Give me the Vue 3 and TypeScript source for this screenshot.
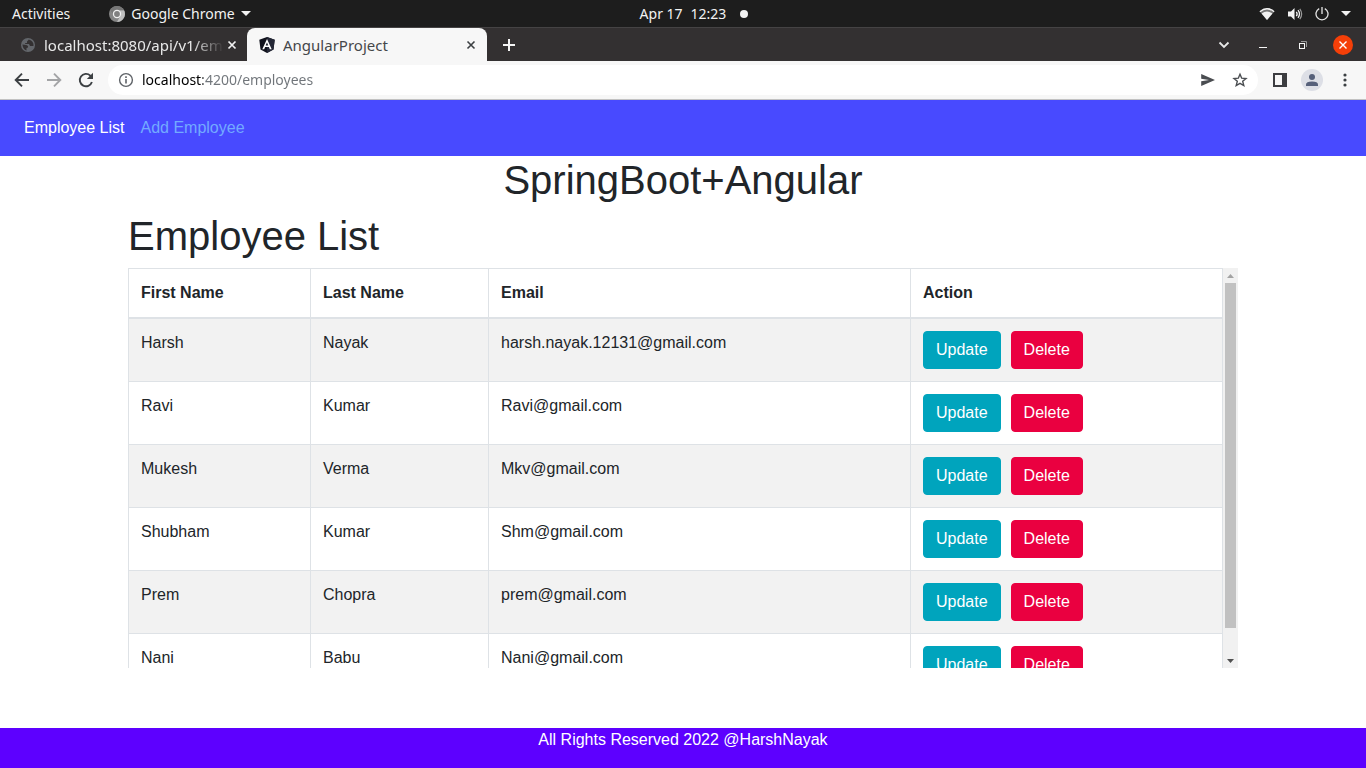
<script setup lang="ts">
import { computed, onMounted, ref } from 'vue'

interface Employee {
  id: number
  firstName: string
  lastName: string
  email: string
}

const employees = ref<Employee[]>([
  { id: 1, firstName: 'Harsh', lastName: 'Nayak', email: 'harsh.nayak.12131@gmail.com' },
  { id: 2, firstName: 'Ravi', lastName: 'Kumar', email: 'Ravi@gmail.com' },
  { id: 3, firstName: 'Mukesh', lastName: 'Verma', email: 'Mkv@gmail.com' },
  { id: 4, firstName: 'Shubham', lastName: 'Kumar', email: 'Shm@gmail.com' },
  { id: 5, firstName: 'Prem', lastName: 'Chopra', email: 'prem@gmail.com' },
  { id: 6, firstName: 'Nani', lastName: 'Babu', email: 'Nani@gmail.com' },
])

const address = ref('localhost:4200/employees')

const viewport = ref<HTMLElement | null>(null)
const visible = ref(1)
const total = ref(1)
const top = ref(0)

function measure(): void {
  const el = viewport.value
  if (!el) return
  visible.value = el.clientHeight
  total.value = el.scrollHeight
  top.value = el.scrollTop
}

function scrollRows(step: number): void {
  viewport.value?.scrollBy({ top: step })
}

const thumbStyle = computed(() => ({
  height: `${(visible.value / total.value) * 100}%`,
  top: `${(top.value / total.value) * 100}%`,
}))

onMounted(measure)
</script>

<template>
  <div class="screen">
    <header class="system-bar">
      <div class="system-left">
        <button type="button" class="plain activities">Activities</button>
        <button type="button" class="plain app-menu">
          <svg width="16" height="16" viewBox="0 0 16 16" aria-hidden="true">
            <circle cx="8" cy="8" r="8" fill="#858585" />
            <path d="M8 4.200H15A8 8 0 0 1 8 16L11.600 9.500Z" fill="#bdbdbd" />
            <path d="M1.200 3.800A8 8 0 0 1 15 4.200H8L4.500 9Z" fill="#777" />
            <circle cx="8" cy="8" r="4.200" fill="#f0f0f0" />
            <circle cx="8" cy="8" r="2.900" fill="#808080" />
          </svg>
          <span>Google Chrome</span>
          <svg width="10" height="5" viewBox="0 0 10 5" aria-hidden="true"><path d="M0 0H10L5 5Z" fill="#f2f2f2" /></svg>
        </button>
      </div>
      <button type="button" class="plain clock"><span>Apr 17</span><span>12:23</span></button>
      <div class="system-right">
        <svg class="notice" width="8" height="8" viewBox="0 0 8 8" aria-hidden="true"><circle cx="4" cy="4" r="4" fill="#f2f2f2" /></svg>
        <button type="button" class="plain status" aria-label="System menu">
          <svg width="16" height="14" viewBox="0 0 16 14" aria-hidden="true">
            <path d="M.5 4.300Q8-2.300 15.500 4.300L8 13Z" fill="#777" />
            <path d="M.5 4.300Q8-2.300 15.500 4.300L14.700 5.200Q8-.2 1.300 5.200Z" fill="#f2f2f2" />
            <path d="M2.600 6.500Q8 2.700 13.400 6.500L8 13Z" fill="#f2f2f2" />
          </svg>
          <svg width="16" height="14" viewBox="0 0 16 14" aria-hidden="true">
            <path d="M1 4.500H4L7.500 1V13L4 9.500H1Z" fill="#f2f2f2" />
            <path d="M9.300 4.800Q11 7 9.300 9.200M11 3.200Q14 7 11 10.800" fill="none" stroke="#f2f2f2" stroke-width="1.300" />
            <path d="M12.800 1.800Q16.500 7 12.800 12.200" fill="none" stroke="#999" stroke-width="1.200" />
          </svg>
          <svg width="14" height="14" viewBox="0 0 14 14" aria-hidden="true">
            <path d="M4.200 1.600A6 6 0 1 0 9.800 1.600M7 0V7" fill="none" stroke="#e6e6e6" stroke-width="1.300" />
          </svg>
          <svg width="10" height="5" viewBox="0 0 10 5" aria-hidden="true"><path d="M0 0H10L5 5Z" fill="#f2f2f2" /></svg>
        </button>
      </div>
    </header>

    <div class="tab-strip">
      <div class="tab">
        <svg width="16" height="16" viewBox="0 0 16 16" aria-hidden="true">
          <circle cx="8" cy="8" r="7" fill="#63666b" />
          <path d="M2.400 7.500L6 8Q8.500 8.500 8 10.500L6.500 11V13.500Q3 12.500 2.400 7.500ZM8.800 2.400L7 4.500V6H5.200V7H9L10 9H13.500Q14 4 8.800 2.400Z" fill="#333031" />
        </svg>
        <button type="button" class="plain tab-title fading">localhost:8080/api/v1/em</button>
        <button type="button" class="plain" aria-label="Close localhost tab">
          <svg width="10" height="10" viewBox="0 0 10 10" aria-hidden="true"><path d="M1.500 1.500L8.500 8.500M8.500 1.500L1.500 8.500" stroke="#f2f2f2" stroke-width="1.700" /></svg>
        </button>
      </div>
      <div class="tab active">
        <svg width="16" height="16" viewBox="0 0 16 16" aria-hidden="true">
          <path d="M8 0L15.700 2.800L14.500 12.500L8 16L1.500 12.500L.3 2.800Z" fill="#11131d" />
          <path d="M8 0L15.700 2.800L14.500 12.500L8 16Z" fill="#242736" />
          <path d="M8 2L3.300 12.300H5.200L6.100 10.100H9.900L10.800 12.300H12.700ZM8 5.400L9.300 8.600H6.700Z" fill="#fff" fill-rule="evenodd" />
        </svg>
        <button type="button" class="plain tab-title">AngularProject</button>
        <button type="button" class="plain" aria-label="Close AngularProject tab">
          <svg width="10" height="10" viewBox="0 0 10 10" aria-hidden="true"><path d="M1.500 1.500L8.500 8.500M8.500 1.500L1.500 8.500" stroke="#3c4043" stroke-width="1.600" /></svg>
        </button>
      </div>
      <button type="button" class="plain new-tab" aria-label="New tab">
        <svg width="12" height="12" viewBox="0 0 12 12" aria-hidden="true"><path d="M6 0V12M0 6H12" stroke="#f5f5f5" stroke-width="2" /></svg>
      </button>
      <div class="window-controls">
        <button type="button" class="plain" aria-label="Search tabs">
          <svg width="12" height="8" viewBox="0 0 12 8" aria-hidden="true"><path d="M1.500 1.500L6 6L10.500 1.500" fill="none" stroke="#e8e8e8" stroke-width="1.800" /></svg>
        </button>
        <button type="button" class="plain" aria-label="Minimize">
          <svg width="8" height="6" viewBox="0 0 8 6" aria-hidden="true"><path d="M0 5.500H8" stroke="#f5f5f5" /></svg>
        </button>
        <button type="button" class="plain" aria-label="Restore">
          <svg width="8" height="8" viewBox="0 0 8 8" aria-hidden="true">
            <path d="M2 .5H7.500V6" fill="none" stroke="#999" />
            <rect x=".5" y="2.500" width="5" height="5" fill="none" stroke="#f5f5f5" />
          </svg>
        </button>
        <button type="button" class="plain" aria-label="Close window">
          <svg width="20" height="20" viewBox="0 0 20 20" aria-hidden="true">
            <circle cx="10" cy="10" r="10" fill="#f53f08" />
            <path d="M6.500 6.500L13.500 13.500M13.500 6.500L6.500 13.500" stroke="#fff" stroke-width="1.400" />
          </svg>
        </button>
      </div>
    </div>

    <div class="toolbar">
      <div class="history">
        <button type="button" class="plain" aria-label="Back">
          <svg width="16" height="16" viewBox="0 0 16 16" aria-hidden="true"><path d="M15 8H2.500M8 1.700L1.700 8L8 14.300" fill="none" stroke="#3c4043" stroke-width="1.900" /></svg>
        </button>
        <button type="button" class="plain" aria-label="Forward">
          <svg width="16" height="16" viewBox="0 0 16 16" aria-hidden="true"><path d="M1 8H13.500M8 1.700L14.300 8L8 14.300" fill="none" stroke="#a3a4a6" stroke-width="1.900" /></svg>
        </button>
        <button type="button" class="plain" aria-label="Reload">
          <svg width="16" height="16" viewBox="0 0 16 16" aria-hidden="true">
            <path d="M13.900 10A6.200 6.200 0 1 1 12.300 3.600L13.500 5" fill="none" stroke="#3c4043" stroke-width="1.900" />
            <path d="M15 .8V7H8.800Z" fill="#3c4043" />
          </svg>
        </button>
      </div>
      <div class="omnibox">
        <svg width="16" height="16" viewBox="0 0 16 16" aria-hidden="true">
          <circle cx="8" cy="8" r="6.400" fill="none" stroke="#5f6368" stroke-width="1.400" />
          <path d="M8 7V11.500M8 4.300V5.900" stroke="#5f6368" stroke-width="1.600" />
        </svg>
        <input v-model="address" type="text" aria-label="Address" spellcheck="false" />
        <button type="button" class="plain" aria-label="Share this page">
          <svg width="16" height="16" viewBox="0 0 16 16" aria-hidden="true"><path d="M1.200 2L15 8L1.200 14V9.300L9 8L1.200 6.700Z" fill="#4a4d51" /></svg>
        </button>
        <button type="button" class="plain" aria-label="Bookmark this tab">
          <svg width="16" height="16" viewBox="0 0 16 16" aria-hidden="true"><path d="M8 2.200L9.700 6.200L14 6.500L10.700 9.300L11.800 13.600L8 11.300L4.200 13.600L5.300 9.300L2 6.500L6.300 6.200Z" fill="none" stroke="#4a4d51" stroke-width="1.400" /></svg>
        </button>
      </div>
      <div class="browser-actions">
        <button type="button" class="plain" aria-label="Side panel">
          <svg width="14" height="14" viewBox="0 0 14 14" aria-hidden="true"><path d="M0 0H14V14H0ZM2 2V12H9V2Z" fill="#3c3d40" fill-rule="evenodd" /></svg>
        </button>
        <button type="button" class="plain" aria-label="Profile">
          <svg width="22" height="22" viewBox="0 0 22 22" aria-hidden="true">
            <circle cx="11" cy="11" r="11" fill="#dddfe6" />
            <circle cx="11" cy="8" r="3" fill="#56607a" />
            <path d="M5 17V15.500Q5 12.500 11 12.500T17 15.500V17Z" fill="#56607a" />
          </svg>
        </button>
        <button type="button" class="plain" aria-label="Browser menu">
          <svg width="4" height="14" viewBox="0 0 4 14" aria-hidden="true"><g fill="#3c4043"><circle cx="2" cy="2" r="1.600" /><circle cx="2" cy="7" r="1.600" /><circle cx="2" cy="12" r="1.600" /></g></svg>
        </button>
      </div>
    </div>

    <nav class="site-nav">
      <a href="#employees" class="current">Employee List</a>
      <a href="#create-employee">Add Employee</a>
    </nav>

    <main class="page">
      <h1 class="brand">SpringBoot+Angular</h1>
      <h2>Employee List</h2>
      <div class="scroll-box">
        <div ref="viewport" class="scroll-view" tabindex="0" @scroll="measure">
          <table>
            <colgroup>
              <col class="col-first" />
              <col class="col-last" />
              <col class="col-email" />
              <col />
            </colgroup>
            <thead>
              <tr>
                <th scope="col">First Name</th>
                <th scope="col">Last Name</th>
                <th scope="col">Email</th>
                <th scope="col">Action</th>
              </tr>
            </thead>
            <tbody>
              <tr v-for="employee in employees" :key="employee.id">
                <td>{{ employee.firstName }}</td>
                <td>{{ employee.lastName }}</td>
                <td>{{ employee.email }}</td>
                <td>
                  <div class="actions">
                    <button type="button" class="btn update">Update</button>
                    <button type="button" class="btn delete">Delete</button>
                  </div>
                </td>
              </tr>
            </tbody>
          </table>
        </div>
        <div class="scrollbar">
          <button type="button" class="plain arrow" aria-label="Scroll up" @click="scrollRows(-40)">
            <svg width="7" height="4" viewBox="0 0 7 4" aria-hidden="true"><path d="M0 4L3.500 0L7 4Z" fill="#a3a3a3" /></svg>
          </button>
          <div class="track"><div class="thumb" :style="thumbStyle"></div></div>
          <button type="button" class="plain arrow" aria-label="Scroll down" @click="scrollRows(40)">
            <svg width="7" height="4" viewBox="0 0 7 4" aria-hidden="true"><path d="M0 0H7L3.500 4Z" fill="#505050" /></svg>
          </button>
        </div>
      </div>
    </main>

    <footer class="site-footer">All Rights Reserved 2022 @HarshNayak</footer>
  </div>
</template>

<style>
body {
  background: #fff;
}
</style>

<style scoped>
* {
  box-sizing: border-box;
}

.screen {
  display: flex;
  flex-direction: column;
  min-height: 100vh;
  font: 16px/24px "Liberation Sans", Arial, sans-serif;
  color: #212529;
}

svg {
  display: block;
  flex: none;
}

.plain {
  display: flex;
  align-items: center;
  padding: 0;
  border: 0;
  background: none;
  color: inherit;
  font: inherit;
  white-space: nowrap;
}

.system-bar,
.toolbar {
  font: 14px/20px "Noto Sans", "Open Sans", sans-serif;
}

.system-bar {
  display: grid;
  grid-template-columns: 1fr auto 1fr;
  align-items: center;
  height: 27px;
  background: #1d1d1d;
  color: #f2f2f2;
}

.system-left {
  display: flex;
  gap: 39px;
  padding-left: 12px;
}

.app-menu {
  gap: 6px;
}

.clock {
  gap: 8px;
}

.system-right {
  display: flex;
  align-items: center;
  justify-content: space-between;
  padding: 0 15px 0 14px;
}

.status {
  gap: 12px;
}

.tab-strip {
  display: flex;
  height: 34px;
  border-top: 1px solid #454344;
  background: #333031;
  color: #e8e8e8;
  font: 15px/20px "Noto Sans", "Open Sans", sans-serif;
}

.tab {
  display: flex;
  align-items: center;
  gap: 8px;
  width: 247px;
  padding: 0 10px 0 20px;
}

.tab.active {
  width: 240px;
  padding: 0 11px 0 12px;
  border-radius: 8px 8px 0 0;
  background: #f7f7f7;
  color: #45474a;
}

.tab-title {
  flex: 1;
  min-width: 0;
  overflow: hidden;
}

.fading {
  margin-right: -8px;
  mask-image: linear-gradient(90deg, #000 148px, transparent 180px);
}

.new-tab {
  padding: 0 16px;
}

.window-controls {
  display: flex;
  align-items: center;
  gap: 32px;
  margin-left: auto;
  padding-right: 13px;
}

.window-controls .plain:first-child {
  margin-right: -3px;
}

.window-controls .plain:last-child {
  margin-left: -6px;
}

.toolbar {
  display: flex;
  align-items: center;
  height: 39px;
  border-bottom: 1px solid #c2c2c2;
  background: #f7f7f7;
}

.history {
  display: flex;
  gap: 16px;
  padding: 0 14px;
}

.omnibox {
  display: flex;
  flex: 1;
  align-items: center;
  gap: 16px;
  height: 30px;
  padding: 0 10px;
  border-radius: 15px;
  background: #fff;
}

.omnibox input {
  flex: 1;
  min-width: 0;
  height: 20px;
  margin-left: -8px;
  padding: 0;
  border: 0;
  outline: 0;
  background: linear-gradient(90deg, #000 61px, #70757a 61px);
  background-clip: text;
  color: transparent;
  caret-color: #000;
  font: inherit;
}

.browser-actions {
  display: flex;
  align-items: center;
  gap: 14px;
  padding: 0 19px 0 15px;
}

.browser-actions .plain:last-child {
  padding-left: 6px;
}

.site-nav {
  display: flex;
  align-items: center;
  gap: 16px;
  height: 56px;
  padding: 0 24px;
  background: #484aff;
}

.site-nav a {
  color: #73aaff;
  text-decoration: none;
}

.site-nav .current {
  color: #fff;
}

.page {
  flex: 1;
  width: 100%;
  max-width: 1140px;
  margin: 0 auto;
  padding: 0 15px 60px;
}

h1,
h2 {
  margin: 0 0 8px;
  font-size: 40px;
  font-weight: 400;
  line-height: 48px;
}

.brand {
  text-align: center;
}

.scroll-box {
  display: flex;
  height: 400px;
}

.scroll-view {
  flex: 1;
  overflow-y: auto;
  scrollbar-width: none;
  outline: 0;
}

.scrollbar {
  display: flex;
  flex-direction: column;
  width: 15px;
  background: #f1f1f1;
}

.arrow {
  justify-content: center;
  height: 15px;
}

.track {
  flex: 1;
  padding: 0 2px;
}

.thumb {
  position: relative;
  background: #c1c1c1;
}

table {
  width: 100%;
  border-collapse: collapse;
  table-layout: fixed;
}

.col-first {
  width: 182px;
}

.col-last {
  width: 178px;
}

.col-email {
  width: 422px;
}

th,
td {
  padding: 12px;
  border: 1px solid #dee2e6;
  text-align: left;
  vertical-align: top;
}

th {
  border-bottom-width: 2px;
}

tbody tr:nth-child(odd) {
  background: #f2f2f2;
}

.actions {
  display: flex;
  gap: 10px;
}

.btn {
  padding: 6px 12px;
  border: 1px solid transparent;
  border-radius: 4px;
  color: #fff;
  font: inherit;
}

.update {
  border-color: #00a4bd;
  background: #00a4bd;
}

.delete {
  border-color: #ea0040;
  background: #ea0040;
}

.site-footer {
  height: 40px;
  background: #5d00ff;
  color: #fff;
  text-align: center;
}
</style>
